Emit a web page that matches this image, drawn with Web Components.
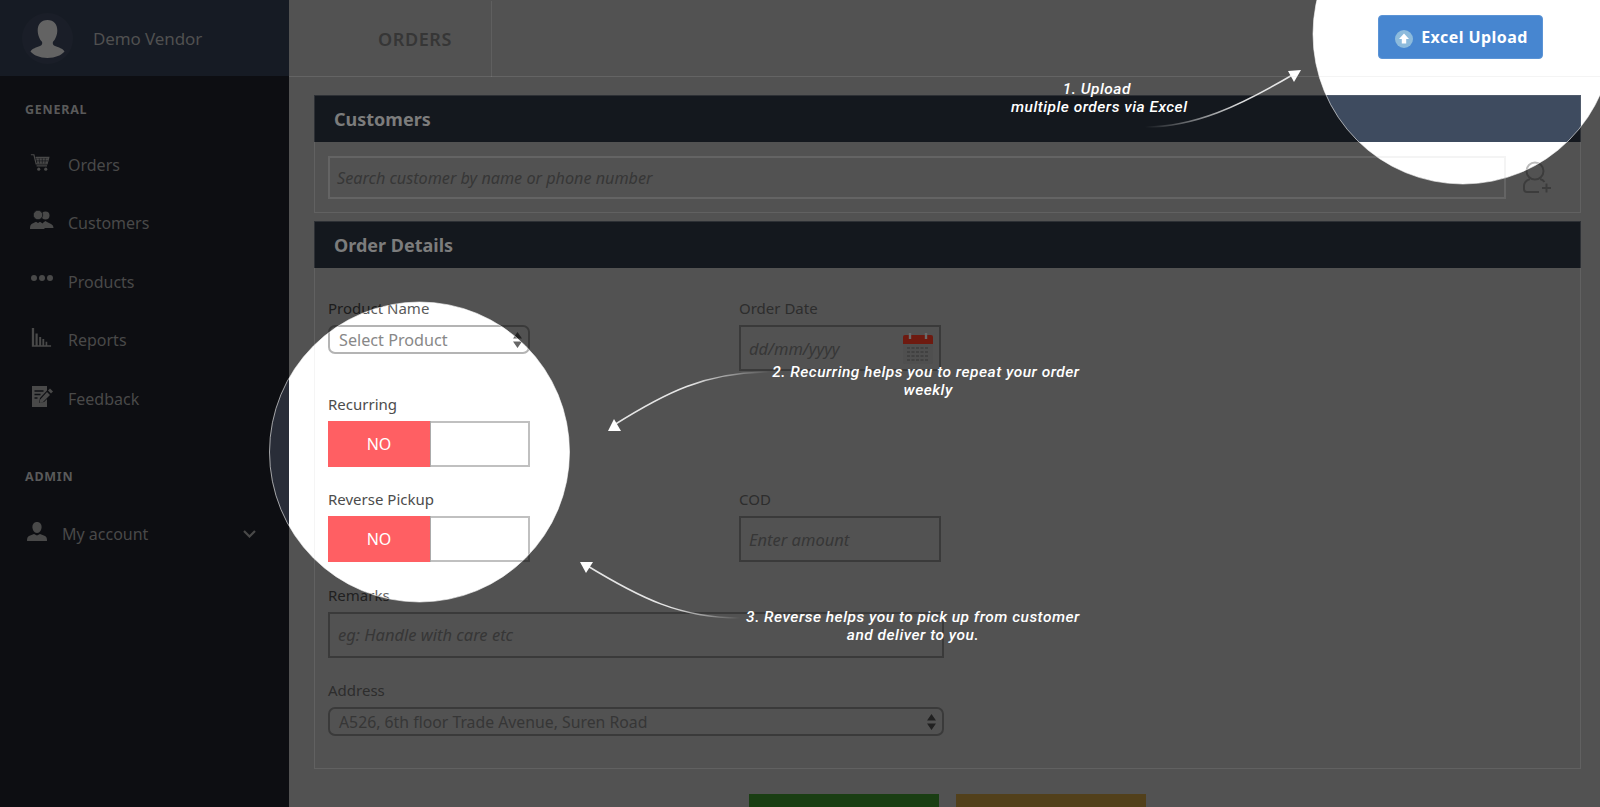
<!DOCTYPE html>
<html>
<head>
<meta charset="utf-8">
<title>Orders</title>
<style>
	html, body { margin: 0; height: 807px; overflow: hidden; background: #fff; }
	body { font-family: "Noto Sans", "Liberation Sans", sans-serif; color: #444; }
</style>
</head>
<body>
<order-page>
	<side-nav slot="nav">
		<nav-group>GENERAL</nav-group>
		<nav-item top="27">Orders<svg slot="icon" width="21" height="21" viewBox="0 0 24 24" fill="currentColor" style="margin-top:2px"><path d="M1 2h3.500l2.500 10.500h12.500l2-7.500H6.500" fill="none" stroke="currentColor" stroke-width="1.400"/><path d="M7 6h14l-1.700 6H8.400z"/><path d="M10.500 6l.5 6M14 6v6M17.500 6l-.5 6M7.500 9h13" stroke="#0f1115" stroke-width=".7" fill="none"/><path d="M7.500 14h12v1.400h-12z"/><circle cx="10" cy="18.500" r="1.800"/><circle cx="18" cy="18.500" r="1.800"/></svg></nav-item>
		<nav-item top="21.500">Customers<svg slot="icon" width="24" height="24" viewBox="0 0 24 24" fill="currentColor"><circle cx="15.500" cy="6.500" r="4"/><path d="M12 19c0-4 .5-5 2-6l1.500-1 1.500 1 4 2c1.500.700 2.500 2 2.500 4z"/><circle cx="8" cy="6" r="4.700" stroke="#0f1115" stroke-width=".8"/><path d="M0 20c0-3 .5-4.500 2-5.200l4-2 2 1.200 2-1.200 3 2c1 .800 1.500 2.200 1.500 5.200z"/></svg></nav-item>
		<nav-item top="21.500">Products<svg slot="icon" width="24" height="24" viewBox="0 0 24 24" fill="currentColor"><circle cx="4" cy="10" r="3"/><circle cx="12" cy="10" r="3"/><circle cx="20" cy="10" r="3"/></svg></nav-item>
		<nav-item top="21.500">Reports<svg slot="icon" width="22" height="22" viewBox="0 0 24 24" fill="currentColor"><path d="M2 1h2.500v19H2zM6 7h2.400v13H6zM10 11h2.200v9H10zM13.500 13h2v7h-2zM17 16h1.800v4H17zM2 20h21v1.500H2z"/></svg></nav-item>
		<nav-item top="21.500">Feedback<svg slot="icon" width="24" height="24" viewBox="0 0 24 24" fill="currentColor"><path d="M2 1h15v4.500L10 13l-1 5 5-1 3-3v8H2z"/><path d="M17 7l3 3-7.500 7.500-3 .5.500-3.200z"/><path d="M18 5.500l2-2 3 3-2 2z"/><path d="M4.500 6h9M4.500 9.500h6M4.500 13h3" stroke="#0f1115" stroke-width="1.300" fill="none"/></svg></nav-item>
		<nav-group top="51">ADMIN</nav-group>
		<nav-item top="29" narrow>My account<svg slot="icon" width="20" height="20" viewBox="0 0 20 20" fill="currentColor"><path d="M10 0c3 0 4.600 2.300 4.600 5s-1.600 6-4.600 6-4.600-3.300-4.600-6 1.600-5 4.600-5z"/><path d="M0 19c0-3 .5-4.500 2.500-5.300L7 12l3 1.500L13 12l4.500 1.700c2 .8 2.500 2.300 2.500 5.300z"/></svg><svg slot="end" width="13" height="8" viewBox="0 0 13 8" fill="none" stroke="currentColor" stroke-width="2.200"><path d="M1 1l5.500 5.500L12 1"/></svg></nav-item>
	</side-nav>

	<top-bar slot="top" heading="ORDERS"></top-bar>

	<panel-box heading="Customers">
		<customer-search></customer-search>
	</panel-box>

	<panel-box heading="Order Details">
		<form-grid>
			<form-field label="Product Name" tone="#5a5a5a"><fake-select text="Select Product"></fake-select></form-field>
			<form-field label="Order Date" tone="#8c8c8c"><fake-input text="dd/mm/yyyy"><svg slot="end" style="position:relative;z-index:2" width="30" height="32" viewBox="0 0 30 32"><rect x="0" y="3" width="30" height="29" rx="2" fill="#4f4f4f"/><path d="M0 12V5a2 2 0 0 1 2-2h26a2 2 0 0 1 2 2v7z" fill="#6e1a10"/><path d="M7 1v6M23 1v6" stroke="#6a6a6a" stroke-width="2.400"/><path d="M4 16h22M4 20h22M4 24h22M4 28h22" stroke="#414141" stroke-width="2" stroke-dasharray="3 1.500"/></svg></fake-input></form-field>
			<form-field label="Recurring"><no-toggle></no-toggle></form-field>
			<span></span>
			<form-field label="Reverse Pickup"><no-toggle></no-toggle></form-field>
			<form-field label="COD" tone="#8c8c8c"><fake-input text="Enter amount"></fake-input></form-field>
			<form-field label="Remarks" tone="#666" wide><fake-input text="eg: Handle with care etc"></fake-input></form-field>
			<form-field label="Address" tone="#8c8c8c" wide><fake-select dim text="A526, 6th floor Trade Avenue, Suren Road"></fake-select></form-field>
		</form-grid>
	</panel-box>

	<form-actions></form-actions>

	<tour-overlay slot="overlay">
		<tour-note x="1011" y="80" w="176">1. Upload&nbsp;<br>multiple orders via Excel</tour-note>
		<tour-note x="760" y="363" w="332">2. Recurring helps you to repeat your order<br>&nbsp;weekly</tour-note>
		<tour-note x="740" y="608" w="346">3. Reverse helps you to pick up from customer<br>and deliver to you.</tour-note>
	</tour-overlay>
</order-page>

<script>
	// Page frame: sidebar on the left, bar and form on the right, tour on top
	class OrderPage extends HTMLElement {
		constructor() {
			super();
			this.attachShadow({ mode: 'open' });
			this.shadowRoot.innerHTML = `
				<style>
					:host { display: grid; grid-template-columns: 289px 1fr; width: 1600px; height: 807px; overflow: hidden; }
					#main { min-width: 0; }
					#content { padding: 18px 19px 0 25px; display: flex; flex-direction: column; gap: 8px; }
				</style>
				<slot name="nav"></slot>
				<div id="main">
					<slot name="top"></slot>
					<div id="content"><slot></slot></div>
				</div>
				<slot name="overlay"></slot>
			`;
		}
	}

	class SideNav extends HTMLElement {
		constructor() {
			super();
			this.attachShadow({ mode: 'open' });
			this.shadowRoot.innerHTML = `
				<style>
					:host { display: block; background: #292d38; height: 807px; }
					#user { height: 76px; background: #465470; display: flex; align-items: center; gap: 20px; padding-left: 22px; box-sizing: border-box; }
					#avatar { width: 51px; height: 51px; border-radius: 50%; background: #525f7c; flex: none; }
					#avatar svg { display: block; position: relative; z-index: 2; }
					#name { position: relative; z-index: 2; font-size: 17px; color: #505050; letter-spacing: -.1px; }
					#links { padding-top: 25px; }
				</style>
				<div id="user">
					<div id="avatar"><svg width="51" height="51" viewBox="0 0 51 51" fill="#636363"><path d="M25.500 7c6.500 0 9.800 4.600 9.800 10.500 0 4.200-1.800 9-4.300 11.300-.6 1.800-.1 3.300 2 4.300 3.500 1.500 8 2.500 9.500 5.500-3 3.700-9 6.400-17 6.400s-14-2.700-17-6.400c1.500-3 6-4 9.500-5.500 2.100-1 2.600-2.500 2-4.300-2.500-2.300-4.300-7.100-4.300-11.300C15.700 11.600 19 7 25.500 7z"/></svg></div>
					<div id="name">Demo Vendor</div>
				</div>
				<div id="links"><slot></slot></div>
			`;
		}
	}

	class NavGroup extends HTMLElement {
		constructor() {
			super();
			this.attachShadow({ mode: 'open' });
			const top = this.getAttribute('top') || 0;
			this.shadowRoot.innerHTML = `
				<style>
					:host { display: block; margin: ${top}px 0 0 25px; height: 18px; line-height: 18px; font-size: 12.500px; font-weight: 700; letter-spacing: .75px; color: #5a5a5a; position: relative; z-index: 2; }
				</style>
				<slot></slot>
			`;
		}
	}

	class NavItem extends HTMLElement {
		constructor() {
			super();
			this.attachShadow({ mode: 'open' });
			const top = this.getAttribute('top') || 0;
			const narrow = this.hasAttribute('narrow');
			this.shadowRoot.innerHTML = `
				<style>
					:host { display: flex; align-items: center; height: 37px; margin-top: ${top}px; padding-left: ${narrow ? 27 : 30}px; font-size: 16px; color: #494949; position: relative; z-index: 2; }
					#icon { width: ${narrow ? 35 : 38}px; display: flex; transform: translateY(-2px); }
					#text { flex: 1; }
					#end { padding-right: 33px; display: flex; }
				</style>
				<div id="icon"><slot name="icon"></slot></div>
				<div id="text"><slot></slot></div>
				<div id="end"><slot name="end"></slot></div>
			`;
		}
	}

	class TopBar extends HTMLElement {
		constructor() {
			super();
			this.attachShadow({ mode: 'open' });
			this.shadowRoot.innerHTML = `
				<style>
					:host { display: flex; align-items: center; height: 77px; position: relative; justify-content: space-between; }
					#line { position: absolute; left: 0; right: 0; bottom: 0; height: 1px; background: rgba(190,190,190,.17); z-index: 2; }
					#title { width: 203px; height: 76px; box-sizing: border-box; border-right: 1px solid rgba(255,255,255,.08); display: flex; align-items: center; padding-left: 89px; font-size: 18px; font-weight: 600; letter-spacing: .6px; position: relative; z-index: 2; color: #363636; }
					button { margin: -3px 57px 0 0; width: 165px; height: 44px; border: 1px solid #5b94d6; border-radius: 4px; background: #4786d0; color: #fff; font: 700 16px "Noto Sans", sans-serif; letter-spacing: .45px; display: flex; align-items: center; justify-content: center; gap: 8px; padding: 0 0 0 2px; }
					svg { display: block; margin-top: 3px; }
				</style>
				<div id="line"></div>
				<div id="title">${this.getAttribute('heading')}</div>
				<button><svg width="18" height="18" viewBox="0 0 18 18"><circle cx="9" cy="9" r="9" fill="#8dbbdc"/><path d="M9 3.500L14 9h-2.800v4.500H6.800V9H4z" fill="#fff"/></svg>Excel Upload</button>
			`;
		}
	}

	class PanelBox extends HTMLElement {
		constructor() {
			super();
			this.attachShadow({ mode: 'open' });
			this.shadowRoot.innerHTML = `
				<style>
					:host { display: block; position: relative; }
					#frame { position: absolute; left: 0; right: 0; top: 0; bottom: 0; border: 1px solid rgba(190,190,190,.15); z-index: 2; pointer-events: none; }
					#head { height: 47px; background: #3e4b5f; display: flex; align-items: center; padding-left: 20px; }
					#head span { position: relative; z-index: 2; font-size: 18px; font-weight: 700; color: #7c7c7c; }
				</style>
				<div id="frame"></div>
				<div id="head"><span>${this.getAttribute('heading')}</span></div>
				<slot></slot>
			`;
		}
	}

	class CustomerSearch extends HTMLElement {
		constructor() {
			super();
			this.attachShadow({ mode: 'open' });
			this.shadowRoot.innerHTML = `
				<style>
					:host { display: flex; align-items: center; padding: 14px 28px 14px 14px; gap: 17px; }
					#box { flex: 1; height: 43px; box-sizing: border-box; display: flex; align-items: center; padding-left: 9px; font-size: 16.200px; font-style: italic; color: #aaa; position: relative; }
					#box::after { content: ''; position: absolute; left: 0; right: 0; top: 0; bottom: 0; border: 2px solid rgba(190,190,190,.17); z-index: 2; }
					svg { display: block; }
				</style>
				<div id="box">Search customer by name or phone number</div>
				<svg width="30" height="34" viewBox="0 0 30 34" fill="none" stroke="#bbb" stroke-width="2"><circle cx="12" cy="10" r="8.500"/><path d="M7 18c-3 1-6 3-6 7v3c0 2 1 3 3 3h12"/><path d="M17 18c2 .5 3.500 1.500 4.500 3"/><path d="M19 27h9M23.500 22.500v9"/></svg>
			`;
		}
	}

	class FormGrid extends HTMLElement {
		constructor() {
			super();
			this.attachShadow({ mode: 'open' });
			this.shadowRoot.innerHTML = `
				<style>
					:host { display: grid; grid-template-columns: 202px 202px; grid-auto-rows: 95.500px; column-gap: 209px; padding: 32px 0 0 14px; height: 501px; box-sizing: border-box; }
				</style>
				<slot></slot>
			`;
		}
	}

	class FormField extends HTMLElement {
		constructor() {
			super();
			this.attachShadow({ mode: 'open' });
			this.shadowRoot.innerHTML = `
				<style>
					:host { display: block; }
					:host([wide]) { grid-column: 1 / 3; width: 616px; }
					#label { height: 25px; line-height: 16px; font-size: 15px; color: ${this.getAttribute('tone') || '#4c4c4c'}; }
				</style>
				<div id="label">${this.getAttribute('label')}</div>
				<slot></slot>
			`;
		}
	}

	class FakeInput extends HTMLElement {
		constructor() {
			super();
			this.attachShadow({ mode: 'open' });
			this.shadowRoot.innerHTML = `
				<style>
					:host { display: flex; align-items: center; justify-content: space-between; height: 46px; box-sizing: border-box; border: 2px solid #b4b4b4; padding: 0 6px 0 8px; font-size: 16.500px; font-style: italic; color: #aaa; }
				</style>
				<span>${this.getAttribute('text')}</span>
				<slot name="end"></slot>
			`;
		}
	}

	class FakeSelect extends HTMLElement {
		constructor() {
			super();
			this.attachShadow({ mode: 'open' });
			const dim = this.hasAttribute('dim');
			this.shadowRoot.innerHTML = `
				<style>
					:host { display: flex; align-items: center; justify-content: space-between; height: 29px; box-sizing: border-box; border: 2px solid #b4b4b4; border-radius: 7px; padding: 0 6px 0 9px; font-size: ${dim ? 15.8 : 16.2}px; color: ${dim ? '#a8a8a8' : '#888'}; background: #fff; }
					svg { display: block; }
				</style>
				<span>${this.getAttribute('text')}</span>
				<svg width="9" height="16" viewBox="0 0 9 16" fill="#666"><path d="M4.500 0L9 6.500H0zM0 9.500h9L4.500 16z"/></svg>
			`;
		}
	}

	class NoToggle extends HTMLElement {
		constructor() {
			super();
			this.attachShadow({ mode: 'open' });
			this.shadowRoot.innerHTML = `
				<style>
					:host { display: flex; height: 46px; box-sizing: border-box; border: 2px solid #c0c0c0; border-left: 0; background: #fff; }
					#no { width: 102px; margin: -2px 0; background: #ff5f63; color: #fff; font-size: 16px; display: flex; align-items: center; justify-content: center; border-right: 1px solid #aaa; box-sizing: content-box; }
				</style>
				<div id="no">NO</div>
			`;
		}
	}

	class FormActions extends HTMLElement {
		constructor() {
			super();
			this.attachShadow({ mode: 'open' });
			this.shadowRoot.innerHTML = `
				<style>
					:host { display: flex; gap: 17px; padding: 17px 0 0 435px; }
					div { width: 190px; height: 50px; }
					#save { background: #51c23b; }
					#reset { background: #ffc854; }
				</style>
				<div id="save"></div>
				<div id="reset"></div>
			`;
		}
	}

	// Dim layer with two round holes, arrows and the notes over it
	class TourOverlay extends HTMLElement {
		constructor() {
			super();
			this.attachShadow({ mode: 'open' });
			this.shadowRoot.innerHTML = `
				<style>
					:host { position: absolute; left: 0; top: 0; width: 1600px; height: 807px; z-index: 1; }
					svg { position: absolute; left: 0; top: 0; }
				</style>
				<svg width="1600" height="807" viewBox="0 0 1600 807">
					<defs>
						<linearGradient id="fadeA" gradientUnits="userSpaceOnUse" x1="1145" y1="127" x2="1240" y2="100"><stop offset="0" stop-color="#fff" stop-opacity="0"/><stop offset="1" stop-color="#fff" stop-opacity=".85"/></linearGradient>
						<linearGradient id="fadeB" gradientUnits="userSpaceOnUse" x1="770" y1="372" x2="690" y2="385"><stop offset="0" stop-color="#fff" stop-opacity="0"/><stop offset="1" stop-color="#fff" stop-opacity=".85"/></linearGradient>
						<linearGradient id="fadeC" gradientUnits="userSpaceOnUse" x1="740" y1="618" x2="670" y2="607"><stop offset="0" stop-color="#fff" stop-opacity="0"/><stop offset="1" stop-color="#fff" stop-opacity=".85"/></linearGradient>
					</defs>
					<path fill-rule="evenodd" fill="rgba(0,0,0,.68)" d="M0 0H1600V807H0Z M1313 34a150 150 0 1 0 300 0a150 150 0 1 0 -300 0Z M269.500 452a150 150 0 1 0 300 0a150 150 0 1 0 -300 0Z"/>
					<circle cx="419.500" cy="452" r="150" fill="none" stroke="#fff" stroke-opacity=".6"/>
					<circle cx="1463" cy="34" r="150" fill="none" stroke="#fff" stroke-opacity=".6"/>
					<g fill="none" stroke-width="1.500">
						<path d="M1145 127C1195 127 1240 106 1294 74" stroke="url(#fadeA)"/>
						<path d="M770 372C705 372 665 393 614 425" stroke="url(#fadeB)"/>
						<path d="M740 618C680 618 640 598 586 565" stroke="url(#fadeC)"/>
					</g>
					<g fill="#fff">
						<path d="M1288 71L1301 70L1294 82Z"/>
						<path d="M614 419L621 431H608Z"/>
						<path d="M580 562H593L586 573Z"/>
					</g>
				</svg>
				<slot></slot>
			`;
		}
	}

	class TourNote extends HTMLElement {
		constructor() {
			super();
			this.attachShadow({ mode: 'open' });
			this.shadowRoot.innerHTML = `
				<style>
					:host { position: absolute; left: ${this.getAttribute('x')}px; top: ${this.getAttribute('y')}px; width: ${this.getAttribute('w')}px; text-align: center; font: italic 500 15.500px/18px Roboto, sans-serif; letter-spacing: .49px; color: #fff; white-space: nowrap; }
				</style>
				<slot></slot>
			`;
		}
	}

	customElements.define('order-page', OrderPage);
	customElements.define('side-nav', SideNav);
	customElements.define('nav-group', NavGroup);
	customElements.define('nav-item', NavItem);
	customElements.define('top-bar', TopBar);
	customElements.define('panel-box', PanelBox);
	customElements.define('customer-search', CustomerSearch);
	customElements.define('form-grid', FormGrid);
	customElements.define('form-field', FormField);
	customElements.define('fake-input', FakeInput);
	customElements.define('fake-select', FakeSelect);
	customElements.define('no-toggle', NoToggle);
	customElements.define('form-actions', FormActions);
	customElements.define('tour-overlay', TourOverlay);
	customElements.define('tour-note', TourNote);
</script>
</body>
</html>
